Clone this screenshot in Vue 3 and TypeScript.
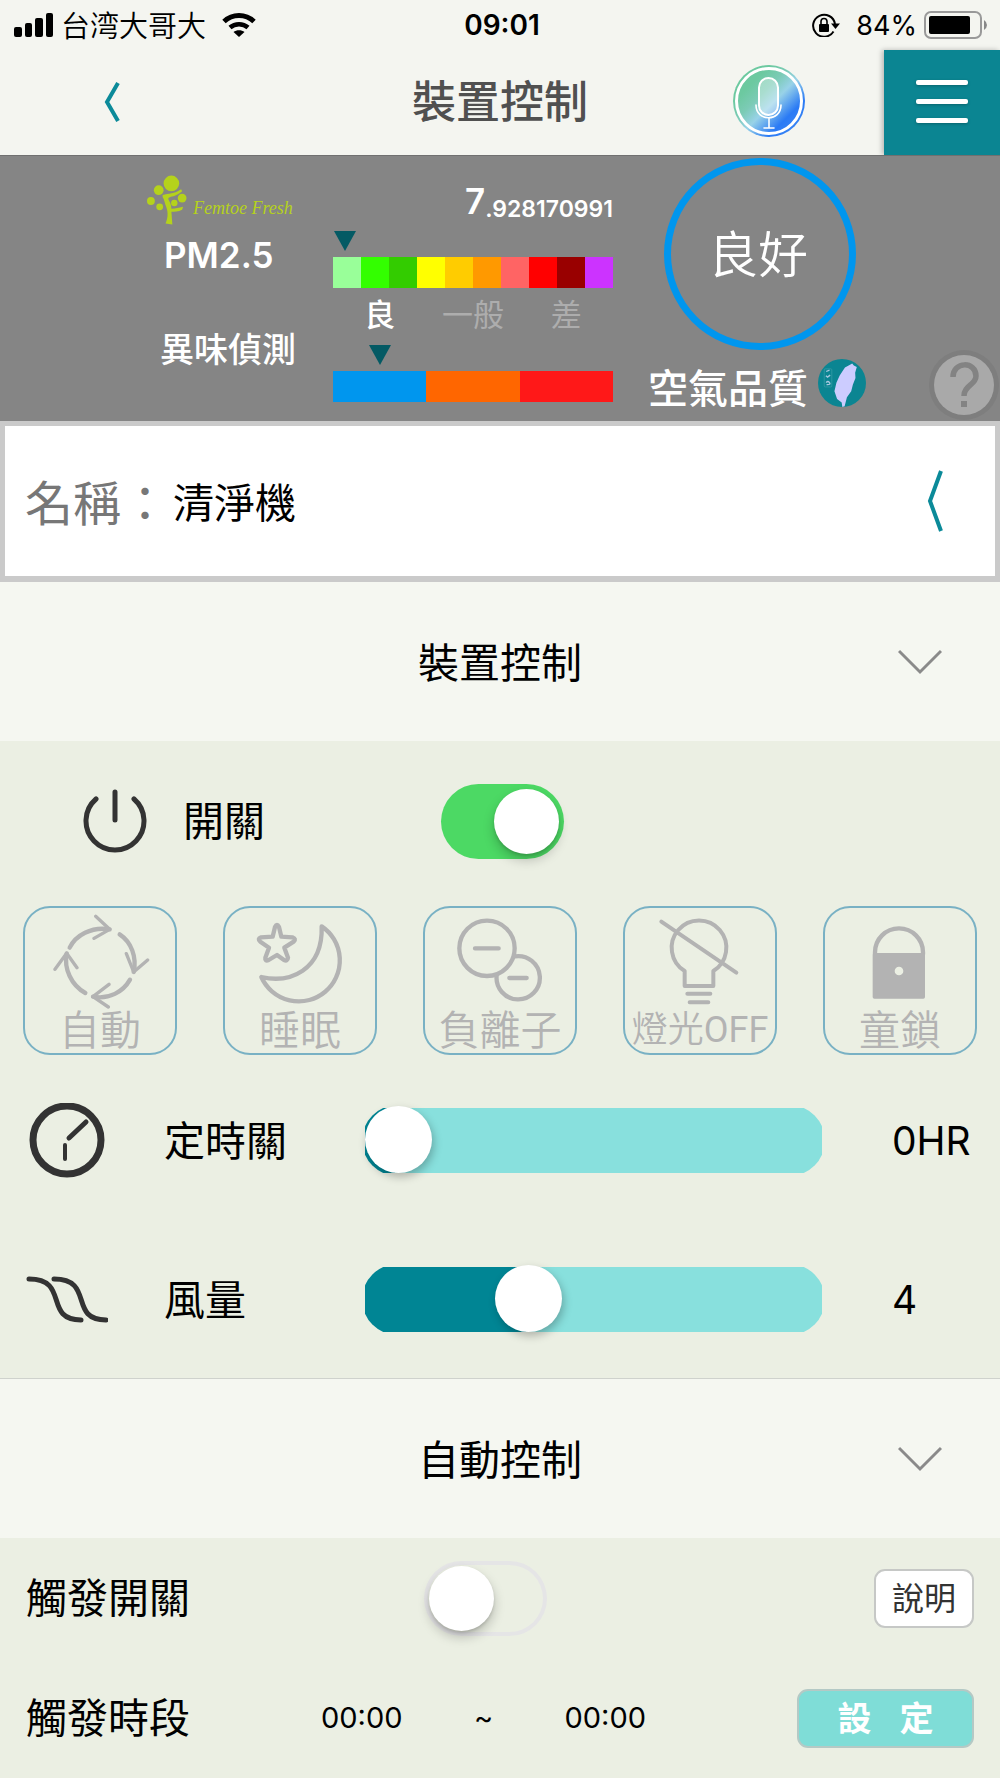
<script setup lang="ts">
import { computed, ref } from 'vue'

const pmScale = ['#99ff99', '#33ff00', '#33cc00', '#ffff00', '#ffcc00', '#ff9900', '#ff6464', '#ff0000', '#990000', '#cc33ff']
const odorScale = ['#0096ee', '#ff6600', '#ff1818']

const power = ref(true)
const trigger = ref(false)
const timer = ref(0)
const fan = ref(4)

const timerFill = computed(() => `${(timer.value / 12) * 100}%`)
const fanFill = computed(() => `${((fan.value - 1) / 9) * 100}%`)
</script>

<template>
  <div class="screen">
    <div class="status">
      <div class="status-side">
        <svg class="signal" viewBox="0 0 40 24" aria-hidden="true">
          <rect x="0" y="14" width="8" height="10" rx="2" />
          <rect x="11" y="10" width="7" height="14" rx="2" />
          <rect x="21" y="5" width="8" height="19" rx="2" />
          <rect x="32" y="0" width="7" height="24" rx="2" />
        </svg>
        <span class="carrier">台湾大哥大</span>
        <svg class="wifi" viewBox="0 0 34 24" aria-hidden="true">
          <path d="M2 8.500C10.500 0.500 23.500 0.500 32 8.500" fill="none" stroke="#000" stroke-width="5" />
          <path d="M8 14.500C13 10 21 10 26 14.500" fill="none" stroke="#000" stroke-width="4.500" />
          <path d="M11.500 19C14.500 16.500 19.500 16.500 22.500 19L17 24Z" />
        </svg>
      </div>
      <span class="clock">09:01</span>
      <div class="status-side end">
        <svg class="lock" viewBox="0 0 28 24" aria-hidden="true">
          <path d="M21.500 18.500A11 11 0 1 1 23 11" fill="none" stroke="#000" stroke-width="2" />
          <path d="M19 10.500H28L23.500 16Z" />
          <rect x="7" y="11" width="10" height="8" rx="1" />
          <path d="M9 11V8.500A3 3 0 0 1 15 8.500V11" fill="none" stroke="#000" stroke-width="1.600" />
        </svg>
        <span class="percent">84%</span>
        <svg class="battery" viewBox="0 0 64 28" aria-hidden="true">
          <rect x="1" y="1" width="56" height="26" rx="6" fill="none" stroke="#999" stroke-width="2" />
          <rect x="5" y="5" width="41" height="18" rx="2" />
          <path d="M60 9Q63 11 63 14Q63 17 60 19Z" fill="#888" />
        </svg>
      </div>
    </div>

    <header class="nav">
      <button class="plain back" type="button" aria-label="返回">
        <svg viewBox="0 0 16 42"><path d="M14 2L3 21L14 40" /></svg>
      </button>
      <h1>裝置控制</h1>
      <div class="nav-end">
        <button class="plain mic" type="button" aria-label="語音">
          <svg viewBox="0 0 72 72">
            <defs>
              <linearGradient id="mic-fill" x1="0.1" y1="0.1" x2="0.9" y2="0.9">
                <stop offset="0.200" stop-color="#6cc9a0" />
                <stop offset="0.380" stop-color="#7ccbb6" />
                <stop offset="0.550" stop-color="#98d2e8" />
                <stop offset="0.800" stop-color="#2a7af5" />
                <stop offset="1" stop-color="#3a86f4" />
              </linearGradient>
            </defs>
            <circle cx="36" cy="36" r="36" fill="url(#mic-fill)" />
            <circle cx="36" cy="36" r="32.500" fill="none" stroke="#fff" stroke-width="3" />
            <rect x="26" y="13" width="19" height="37" rx="9.500" fill="#fff" fill-opacity="0.350" stroke="#fff" stroke-width="2" />
            <path d="M23 40C23 57 48 57 48 40M36 53V63M31 63H41" fill="none" stroke="#fff" stroke-width="1.600" stroke-linecap="round" />
          </svg>
        </button>
        <button class="plain menu" type="button" aria-label="選單">
          <span></span><span></span><span></span>
        </button>
      </div>
    </header>

    <section class="panel">
      <div class="panel-labels">
        <div class="brand">
          <svg viewBox="0 0 41 50" aria-hidden="true">
            <circle cx="25" cy="8" r="8" /><circle cx="12" cy="15" r="5" /><circle cx="4" cy="26" r="4" />
            <circle cx="13" cy="32" r="3.500" /><circle cx="36" cy="23" r="4.500" /><circle cx="28" cy="28" r="3.300" />
            <path d="M16 20C22 18 28 19 35 14L36 16C29 22 24 21 22 23C21 25 25 27 25 34C30 34 32 33 37 32L36 35C32 37 28 37 25 37L26 50L19 49C21 45 22 39 20 33C18 28 18 25 16 22Z" />
          </svg>
          <span>Femtoe Fresh</span>
        </div>
        <strong class="pm">PM2.5</strong>
        <strong class="odor">異味偵測</strong>
      </div>

      <div class="gauges">
        <div class="reading"><b>7</b><small>.928170991</small></div>
        <span class="pointer pm-pointer"></span>
        <div class="bar pm-bar"><i v-for="c in pmScale" :key="c" :style="{ background: c }"></i></div>
        <div class="grades"><span class="on">良</span><span>一般</span><span>差</span></div>
        <span class="pointer odor-pointer"></span>
        <div class="bar odor-bar"><i v-for="c in odorScale" :key="c" :style="{ background: c }"></i></div>
      </div>

      <div class="quality">
        <div class="ring">良好</div>
        <div class="quality-name">
          <span>空氣品質</span>
          <svg viewBox="0 0 146 146" aria-hidden="true">
            <circle cx="73" cy="73" r="73" fill="#0b8592" />
            <path d="M96 18L104 14L109 20L118 24L113 42L114 58L106 78L101 98L88 116L81 144L74 146L72 132L58 122L50 98L56 72L66 50L82 26Z" fill="#ccccff" />
            <rect x="19" y="30" width="23" height="55" rx="3" fill="none" stroke="#3e9fa9" stroke-width="2" />
            <path d="M25 38L35 34M24 51L29 55L37 49M25 72Q30 65 35 72T26 78" fill="none" stroke="#a9c8df" stroke-width="4" />
          </svg>
        </div>
      </div>

      <button class="plain help" type="button" aria-label="說明">
        <svg viewBox="0 0 70 70">
          <circle cx="35" cy="35" r="35" fill="#7e7e7e" />
          <circle cx="35" cy="35" r="30" fill="#a9a9a9" />
          <path d="M24 27C24 11 47 11 47 26C47 35 35 35 35 46" fill="none" stroke="#838383" stroke-width="5.500" />
          <rect x="32" y="51" width="6" height="6" fill="#838383" />
        </svg>
      </button>
    </section>

    <button class="name" type="button">
      <span class="name-key">名稱：</span>
      <span class="name-value">清淨機</span>
      <svg viewBox="0 0 18 64" aria-hidden="true"><path d="M15 2L4 32L15 62" /></svg>
    </button>

    <button class="section-head" type="button">
      <span>裝置控制</span>
      <svg viewBox="0 0 44 26" aria-hidden="true"><path d="M1 2L22 23L43 2" /></svg>
    </button>

    <section class="body">
      <label class="row power-row">
        <svg viewBox="0 0 64 64" aria-hidden="true">
          <path d="M13 10A29 29 0 1 0 51 10M32 3V31" />
        </svg>
        <span>開關</span>
        <input v-model="power" class="switch" type="checkbox" role="switch" />
      </label>

      <div class="tiles">
        <button class="tile" type="button">
          <svg viewBox="6 6 450 300" aria-hidden="true">
            <g stroke-width="13">
              <path d="M140 122C158 85 205 58 260 67M290 82C325 105 342 150 332 195M321 218C300 255 258 278 210 269M187 258C145 235 122 185 131 139" />
            </g>
            <path stroke-width="10" d="M218 28L260 67L213 94M310 140L332 195L374 159M258 232L210 269L256 300M96 187L131 139L162 182" />
          </svg>
          <span>自動</span>
        </button>
        <button class="tile" type="button">
          <svg viewBox="6 6 450 300" aria-hidden="true">
            <g stroke-width="13">
              <path d="M156 60Q162 48 168 60L175 89L208 91Q221 96 212 104L184 122L195 152Q194 164 183 159L162 144L137 159Q125 164 127 152L138 122L112 104Q102 95 114 91L149 89Z" />
              <path d="M296 58A123 123 0 1 1 115 210C200 230 300 190 296 58Z" />
            </g>
          </svg>
          <span>睡眠</span>
        </button>
        <button class="tile" type="button">
          <svg viewBox="6 6 450 300" aria-hidden="true">
            <g stroke-width="13">
              <circle cx="192" cy="124" r="83" />
              <path d="M276 148A65 65 0 1 1 221 205M156 124H227M259 213H311" />
            </g>
          </svg>
          <span>負離子</span>
        </button>
        <button class="tile latin" type="button">
          <svg viewBox="6 6 450 300" aria-hidden="true">
            <g stroke-width="12">
              <path d="M185 237V192A82 82 0 1 1 271 192V237ZM193 260H262M200 286H256M115 44L340 197" />
            </g>
          </svg>
          <span>燈光<b>OFF</b></span>
        </button>
        <button class="tile" type="button">
          <svg viewBox="6 6 450 300" aria-hidden="true">
            <path stroke-width="13" d="M156 142V136A72 72 0 0 1 300 136V142" />
            <path class="solid" fill-rule="evenodd" d="M154 138H301Q306 138 306 143V270Q306 275 301 275H154Q149 275 149 270V143Q149 138 154 138ZM228 179A13 13 0 1 0 228 205A13 13 0 1 0 228 179Z" />
          </svg>
          <span>童鎖</span>
        </button>
      </div>

      <div class="row range-row">
        <svg viewBox="0 0 82 76" aria-hidden="true">
          <circle cx="41" cy="37" r="34" stroke-width="7" />
          <path stroke-width="5" d="M43 35L60 19" />
          <path stroke-width="4" d="M39 42V56" />
        </svg>
        <label for="timer">定時關</label>
        <div class="range" :style="{ '--fill': timerFill }">
          <span class="track"></span>
          <input id="timer" v-model.number="timer" type="range" min="0" max="12" />
        </div>
        <output for="timer">{{ timer }}HR</output>
      </div>

      <div class="row range-row">
        <svg viewBox="0 0 82 76" aria-hidden="true">
          <path stroke-width="5" d="M3 17C44 17 17 58 55 58M28 17C69 17 42 58 80 58" />
        </svg>
        <label for="fan">風量</label>
        <div class="range" :style="{ '--fill': fanFill }">
          <span class="track"></span>
          <input id="fan" v-model.number="fan" type="range" min="1" max="10" />
        </div>
        <output for="fan">{{ fan }}</output>
      </div>
    </section>

    <button class="section-head lined" type="button">
      <span>自動控制</span>
      <svg viewBox="0 0 44 26" aria-hidden="true"><path d="M1 2L22 23L43 2" /></svg>
    </button>

    <section class="body">
      <div class="row trigger-row">
        <label for="trigger">觸發開關</label>
        <input id="trigger" v-model="trigger" class="switch" type="checkbox" role="switch" />
        <button class="btn info" type="button">說明</button>
      </div>
      <div class="row period-row">
        <span>觸發時段</span>
        <div class="period"><time>00:00</time><span>~</span><time>00:00</time></div>
        <button class="btn set" type="button"><span>設</span><span>定</span></button>
      </div>
    </section>
  </div>
</template>

<style>
body {
  margin: 0;
  background: #ebefe3;
}
</style>

<style scoped>
.screen {
  font-family: Inter, "Noto Sans CJK TC", sans-serif;
  color: #000;
  background: #ebefe3;
}
.screen *,
.screen *::before {
  box-sizing: border-box;
}
svg {
  display: block;
  flex: none;
}
button {
  font-family: inherit;
  color: inherit;
  cursor: pointer;
}
.plain {
  padding: 0;
  border: 0;
  background: none;
}

/* status bar */
.status {
  display: grid;
  grid-template-columns: 1fr auto 1fr;
  align-items: center;
  height: 50px;
  padding: 0 12px 0 14px;
  background: #f4f5f0;
}
.status-side {
  display: flex;
  align-items: center;
}
.end {
  justify-content: flex-end;
}
.signal {
  width: 40px;
  height: 24px;
}
.carrier {
  margin: 0 16px 0 7px;
  padding-bottom: 2px;
  font: 350 29px/40px "Noto Sans CJK SC", sans-serif;
}
.wifi {
  width: 34px;
  height: 24px;
}
.clock {
  padding-left: 2px;
  font-size: 28px;
  font-weight: 600;
}
.lock {
  width: 28px;
  height: 24px;
}
.percent {
  margin: 0 7px 0 16px;
  font-size: 27px;
}
.battery {
  width: 64px;
  height: 28px;
}

/* title bar */
.nav {
  display: grid;
  grid-template-columns: 1fr auto 1fr;
  height: 105px;
  background: #f4f5f0;
}
.back {
  justify-self: start;
  padding-bottom: 2px;
  margin-left: 104px;
}
.back svg {
  width: 16px;
  height: 42px;
}
.back path,
.name path {
  fill: none;
  stroke: #0b8a99;
  stroke-width: 4;
}
h1 {
  margin: 0;
  padding-bottom: 2px;
  align-self: center;
  font-size: 44px;
  line-height: 60px;
  font-weight: 500;
  color: #505050;
}
.nav-end {
  display: flex;
  justify-content: flex-end;
  gap: 79px;
}
.mic {
  padding-bottom: 4px;
}
.mic svg {
  width: 72px;
  height: 72px;
}
.menu {
  display: flex;
  flex-direction: column;
  align-items: center;
  justify-content: center;
  gap: 14px;
  width: 116px;
  padding-bottom: 2px;
  background: #0b8592;
  box-shadow: -2px 0 5px rgba(0, 0, 0, 0.25);
}
.menu span {
  width: 52px;
  height: 5px;
  border-radius: 2px;
  background: #fff;
  box-shadow: 0 1px 3px rgba(0, 0, 0, 0.25);
}

/* air quality panel */
.panel {
  position: relative;
  display: grid;
  grid-template-columns: 333fr 280fr 387fr;
  height: 266px;
  border-top: 1px solid #707070;
  background: #858585;
  color: #fff;
}
.panel-labels {
  display: flex;
  flex-direction: column;
  padding-top: 19px;
  line-height: 44px;
}
.brand {
  display: flex;
  gap: 6px;
  height: 58px;
  padding-left: 147px;
  color: #b5d21b;
}
.brand svg {
  width: 40px;
  height: 50px;
  fill: currentColor;
}
.brand span {
  padding-top: 12px;
  font: italic 18px/42px "Liberation Serif", serif;
  white-space: nowrap;
}
.pm {
  padding-left: 164px;
  font-size: 35px;
  font-weight: 600;
}
.odor {
  margin-top: 51px;
  padding-left: 160px;
  font-size: 34px;
  font-weight: 500;
}
.gauges {
  padding-top: 23px;
}
.reading {
  display: flex;
  align-items: flex-end;
  justify-content: flex-end;
}
.reading b {
  font-size: 35px;
  line-height: 44px;
  font-weight: 600;
}
.reading small {
  font-size: 23px;
  line-height: 28px;
  font-weight: 600;
}
.pointer {
  display: block;
  width: 22px;
  height: 20px;
  background: #045a64;
  clip-path: polygon(0 0, 100% 0, 50% 100%);
}
.pm-pointer {
  margin: 8px 0 6px 1px;
}
.odor-pointer {
  margin: 12px 0 6px 36px;
}
.bar {
  display: flex;
  height: 31px;
}
.bar i {
  flex: 1;
}
.grades {
  display: grid;
  grid-template-columns: 1fr 1fr 1fr;
  margin-top: 9px;
  font-size: 31px;
  line-height: 36px;
  text-align: center;
  color: #adadad;
}
.on {
  color: #fff;
  font-weight: 500;
}
.quality {
  display: flex;
  flex-direction: column;
  align-items: flex-start;
  gap: 9px;
  padding: 2px 0 0 35px;
}
.ring {
  display: grid;
  place-items: center;
  width: 192px;
  height: 192px;
  margin-left: 16px;
  padding: 0 4px 6px 0;
  border: 7px solid #0096ee;
  border-radius: 50%;
  font-size: 50px;
  font-weight: 350;
}
.quality-name {
  display: flex;
  gap: 10px;
  font-size: 40px;
  line-height: 60px;
  font-weight: 500;
}
.quality-name svg {
  width: 48px;
  height: 48px;
}
.help {
  position: absolute;
  right: 1px;
  bottom: 1px;
}
.help svg {
  width: 70px;
  height: 70px;
}

/* device name */
.name {
  display: flex;
  align-items: center;
  width: 100%;
  height: 161px;
  padding: 0 51px 0 20px;
  border: solid #cacaca;
  border-width: 5px 5px 6px;
  background: #fff;
  text-align: left;
}
.name span {
  padding-bottom: 3px;
}
.name-key {
  width: 148px;
  font-size: 48px;
  color: #777;
}
.name-value {
  flex: 1;
  font-size: 41px;
}
.name svg {
  width: 18px;
  height: 64px;
}

/* collapsible headings */
.section-head {
  display: grid;
  grid-template-columns: 1fr auto 1fr;
  align-items: center;
  width: 100%;
  height: 159px;
  padding: 0 58px;
  border: 0;
  background: #f5f7f1;
  font-size: 41px;
}
.section-head span {
  grid-column: 2;
  padding-bottom: 4px;
}
.section-head svg {
  justify-self: end;
  width: 44px;
  height: 26px;
}
.section-head path {
  fill: none;
  stroke: #8a8a8a;
  stroke-width: 3;
}
.lined {
  box-shadow: 0 -1px 0 #cfd2cd;
}

/* rows */
.row {
  display: flex;
  align-items: center;
  height: 159px;
  font-size: 41px;
  line-height: 60px;
}
.row svg {
  fill: none;
  stroke: #333;
  stroke-linecap: round;
}
.power-row {
  padding: 1px 0 0 83px;
}
.power-row svg {
  width: 64px;
  height: 64px;
  margin-right: 36px;
  stroke-width: 5;
}
.power-row span {
  width: 258px;
}
.switch {
  appearance: none;
  flex: none;
  width: 123px;
  height: 75px;
  margin: 0;
  padding: 5px;
  border-radius: 38px;
  box-shadow: inset 0 0 0 4px #e5e5e6;
  cursor: pointer;
}
.switch::before {
  content: "";
  display: block;
  width: 65px;
  height: 65px;
  border-radius: 50%;
  background: #fff;
  box-shadow: 0 6px 12px rgba(0, 0, 0, 0.22), 0 2px 3px rgba(0, 0, 0, 0.12);
}
.switch:checked {
  background: #4cd964;
  box-shadow: none;
}
.switch:checked::before {
  margin-left: auto;
}

/* mode tiles */
.tiles {
  display: flex;
  justify-content: space-between;
  padding: 6px 23px;
}
.tile {
  width: 154px;
  height: 149px;
  padding: 0;
  border: 2px solid #79b1c4;
  border-radius: 27px;
  background: none;
  font-size: 41px;
  line-height: 43px;
  font-weight: 350;
  color: #b3b3b3;
  white-space: nowrap;
}
.tile svg {
  width: 150px;
  height: 100px;
  fill: none;
  stroke: #b3b3b3;
  stroke-linecap: round;
  stroke-linejoin: round;
}
.tile span {
  display: block;
}
.tile .solid {
  fill: #b3b3b3;
  stroke: none;
}
.latin {
  font-family: Roboto, "Noto Sans CJK TC", sans-serif;
  font-size: 36px;
}
.latin b {
  font-weight: 400;
}

/* sliders */
.range-row {
  padding: 0 26px;
}
.range-row svg {
  width: 82px;
  height: 76px;
}
.range-row label {
  width: 201px;
  margin-left: 56px;
}
.range {
  display: grid;
  flex: 1;
  align-items: center;
}
.track {
  position: relative;
  grid-area: 1 / 1;
  height: 65px;
  overflow: hidden;
}
.track::before {
  content: "";
  position: absolute;
  inset: -3px;
  border-radius: 36px;
  background: linear-gradient(to right, #008594 max(33px, calc(var(--fill) + 10px)), #88e0dd 0);
}
.range input {
  appearance: none;
  position: relative;
  grid-area: 1 / 1;
  width: 100%;
  height: 67px;
  margin: 0 0 2px;
  background: none;
  cursor: pointer;
}
.range input::-webkit-slider-thumb {
  appearance: none;
  width: 67px;
  height: 67px;
  border-radius: 50%;
  background: #fff;
  box-shadow: 2px 4px 8px rgba(0, 0, 0, 0.25);
}
.range-row output {
  width: 82px;
  margin-left: 70px;
  font-size: 39px;
}

/* trigger settings */
.trigger-row,
.period-row {
  height: 120px;
  padding: 0 26px;
}
.trigger-row label {
  width: 398px;
}
.btn {
  height: 59px;
  margin-left: auto;
  padding: 0 0 4px;
  border: 2px solid #c6c8c6;
  border-radius: 11px;
}
.info {
  width: 100px;
  background: #fff;
  font-size: 32px;
  color: #333;
}
.period-row > span {
  width: 295px;
}
.period {
  display: flex;
  align-items: center;
  justify-content: space-between;
  width: 325px;
  font-size: 29px;
}
.set {
  display: flex;
  align-items: center;
  justify-content: center;
  gap: 28px;
  width: 177px;
  border-color: #b4c9c5;
  background: #7fddd7;
  font-size: 34px;
  font-weight: 700;
  color: #fff;
}
</style>
